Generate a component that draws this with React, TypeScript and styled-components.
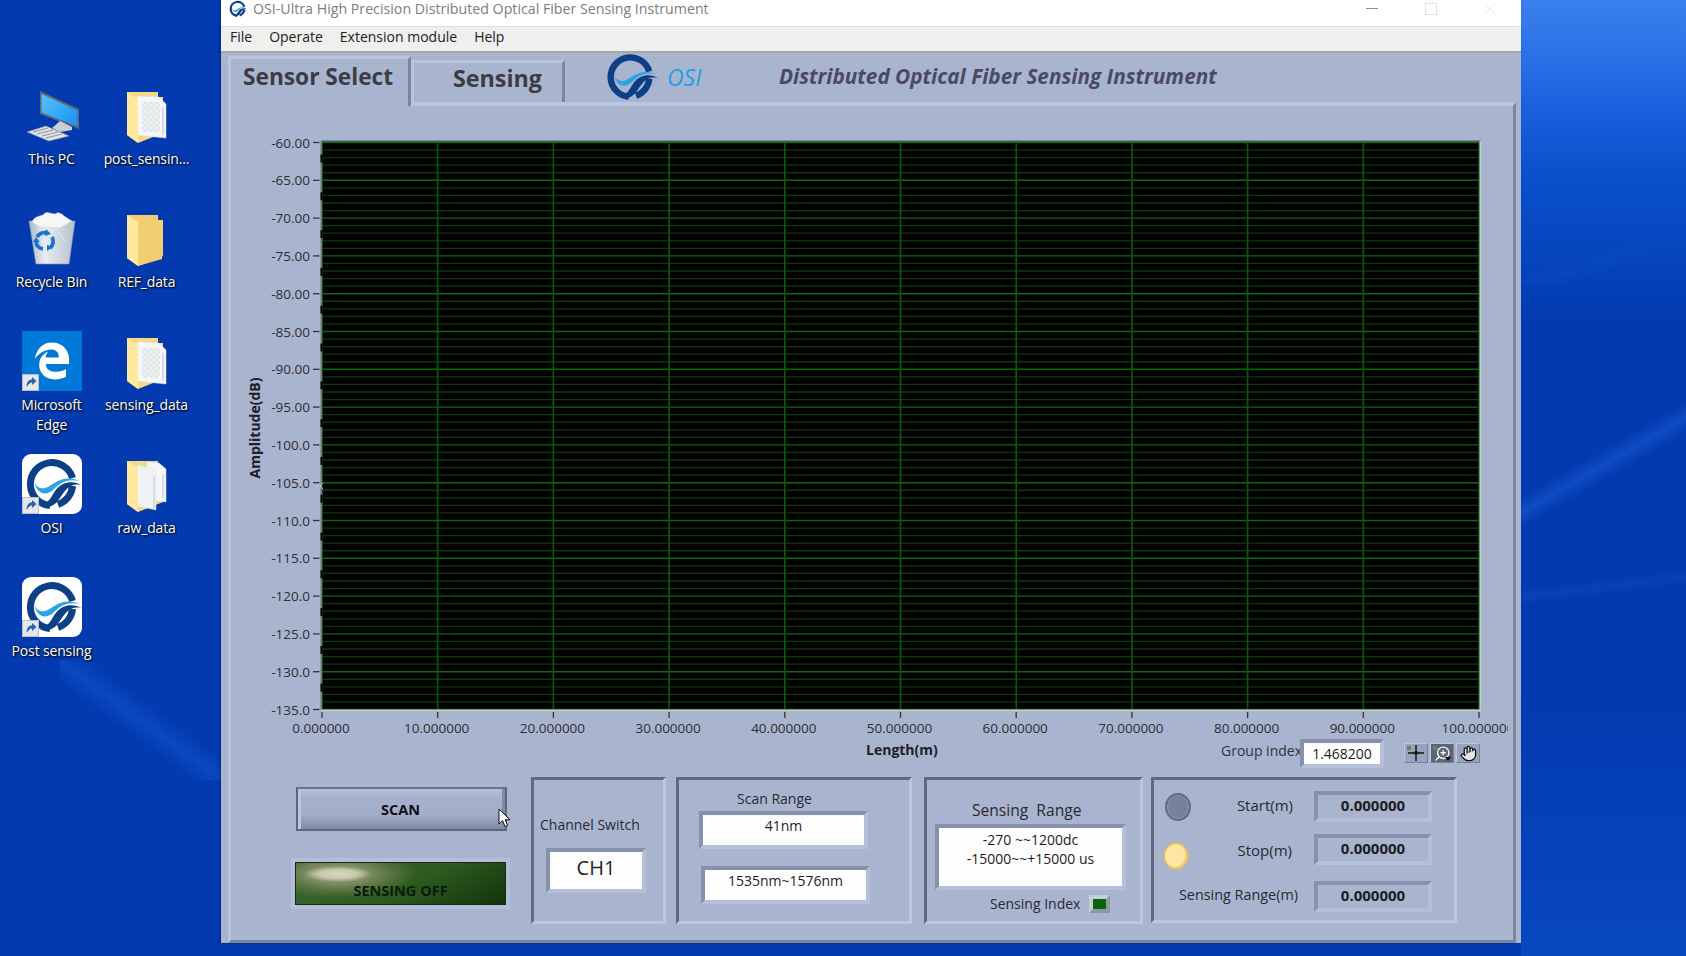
import React from "react";
import styled, { createGlobalStyle } from "styled-components";
import { Hand, ZoomIn } from "lucide-react";
import { FaEdgeLegacy } from "react-icons/fa6";

const UI_FONT = `"Open Sans", "Noto Sans", "Liberation Sans", sans-serif`;
const PANEL = "#a9b4cf";
const LIGHT = "#b9c4e1";
const DARK = "#626a82";

const Global = createGlobalStyle`
  html, body { margin: 0; padding: 0; overflow: hidden; background: #033ab0; }
  * { box-sizing: border-box; }
`;

const Desktop = styled.div`
  width: 1686px;
  height: 956px;
  display: flex;
  align-items: flex-start;
  overflow: hidden;
  font-family: ${UI_FONT};
  background:
    linear-gradient(180deg, #3a80ec 0, #2a70e6 60px, #1a5fdc 110px, #0c50cc 170px, #0649c2 230px, rgba(6, 73, 194, 0) 320px) right top / 165px 320px no-repeat,
    linear-gradient(163deg, transparent 35%, rgba(40, 110, 225, 0.18) 50%, transparent 65%) 1521px 235px / 165px 50px no-repeat,
    linear-gradient(150deg, transparent 43%, rgba(35, 105, 225, 0.38) 50%, transparent 57%) 1521px 395px / 165px 140px no-repeat,
    linear-gradient(173deg, transparent 35%, rgba(40, 110, 225, 0.16) 50%, transparent 65%) 1521px 572px / 165px 30px no-repeat,
    linear-gradient(36deg, transparent 40%, rgba(20, 100, 225, 0.34) 50%, transparent 60%) 60px 660px / 161px 120px no-repeat,
    linear-gradient(180deg, rgba(8, 72, 192, 0) 0, #0848c0 100%) right 700px / 165px 256px no-repeat,
    #033ab0;
`;

const IconGrid = styled.div`
  width: 221px;
  flex: none;
  padding: 85px 0 0 4px;
  display: grid;
  grid-template-columns: 95px 95px;
  grid-auto-rows: 123px;
  justify-content: start;
`;

const IconCell = styled.div`
  display: flex;
  flex-direction: column;
  align-items: center;
`;

const IconArt = styled.svg`
  width: 60px;
  height: 60px;
  display: block;
  flex: none;
`;

const IconLabel = styled.div`
  margin-top: 4px;
  width: 95px;
  text-align: center;
  color: #fff;
  font-size: 14px;
  line-height: 19.5px;
  letter-spacing: -0.15px;
  text-shadow: 1px 1px 2px #000, 0 0 2px rgba(0, 0, 0, 0.7);
`;

const Shortcut = () => (
  <g>
    <rect x="0.5" y="43.5" width="16" height="16" fill="#e4e7ec" stroke="#b9bec7" />
    <path d="M4.5 56 C4.5 50.5 7 48.5 10 48.2 L10 46 L14.5 50 L10 54 L10 51.5 C8 51.5 6.5 53 4.5 56 Z" fill="#2d64a8" />
  </g>
);

const LogoMark = () => (
  <g>
    <path d="M50.5 24 A21.5 21.5 0 1 0 28 51.5" fill="none" stroke="#0d3f86" strokeWidth="7" />
    <path d="M50.5 32 A21.5 21.5 0 0 1 36 50.5" fill="none" stroke="#0d3f86" strokeWidth="7" />
    <path d="M20 49 C31 49 29 36 41 30 C47 27 54 28 60 31 C52 29.5 47 32 43 37 C37 44 36 50 27 53 Z" fill="#0d3f86" />
    <path d="M12 27 C14 33 18 35 23 34 C31 32 39 19 58 27 C44 24 37 30 31 36 C24 42 15 41 12 27 Z" fill="#2aa5e6" />
  </g>
);

const PcIcon = () => (
  <IconArt viewBox="0 0 60 60">
    <defs>
      <linearGradient id="pcScreen" x1="0" y1="0" x2="1" y2="1">
        <stop offset="0" stopColor="#55c3ff" />
        <stop offset="1" stopColor="#1b8fee" />
      </linearGradient>
    </defs>
    <polygon points="18,6 57,24 57,44 18,29" fill="#5f6772" />
    <polygon points="19.5,9 55.5,25.5 55.5,41.5 19.5,27.5" fill="url(#pcScreen)" />
    <polygon points="38,36 50,42 50,45 38,47 30,43" fill="#c8ced6" />
    <polygon points="5,47 24,41 47,51 27,56" fill="#dfe3e8" stroke="#8d939c" strokeWidth="0.6" />
    <path d="M11 47 L26 43 M15 49 L31 45 M20 51 L36 47 M24 53 L40 49" stroke="#8d939c" strokeWidth="1" />
  </IconArt>
);

const BinIcon = () => (
  <IconArt viewBox="0 0 60 60">
    <defs>
      <linearGradient id="binBody" x1="0" y1="0" x2="1" y2="0">
        <stop offset="0" stopColor="#aab7c6" />
        <stop offset="0.35" stopColor="#e8edf2" />
        <stop offset="1" stopColor="#b5c0cd" />
      </linearGradient>
    </defs>
    <polygon points="7,13 53,13 47,56 14,56" fill="url(#binBody)" stroke="#8b98a8" strokeWidth="0.6" />
    <path d="M10 14 C13 7 19 9 22 6 C26 2 31 8 35 5 C39 4 42 9 50 13 L38 20 L18 19 Z" fill="#f5f6f8" stroke="#c5ccd5" strokeWidth="0.6" />
    <path d="M16 20 L26 30 M33 20 L44 34 M22 22 L36 44" stroke="#dfe4ea" strokeWidth="1.2" />
    <g fill="none" stroke="#1e73d2" strokeWidth="3.8">
      <path d="M15 29 A8.5 8.5 0 0 1 25 25" />
      <path d="M30 29 A8.5 8.5 0 0 1 28 40" />
      <path d="M21 41 A8.5 8.5 0 0 1 14 34" />
    </g>
    <path d="M24 21 L29 26 L23 28 Z M31 39 L25 43 L25 37 Z M11 34 L18 34 L14 29 Z" fill="#1e73d2" />
  </IconArt>
);

const EdgeTile = styled.div`
  position: relative;
  width: 60px;
  height: 60px;
  flex: none;
  background: #0078d7;
  color: #fff;
  display: flex;
  align-items: center;
  justify-content: center;
  font-size: 38px;
`;

const OverlayBadge = styled.svg`
  position: absolute;
  left: 0;
  top: 0;
  width: 60px;
  height: 60px;
`;

const EdgeIcon = () => (
  <EdgeTile>
    <FaEdgeLegacy />
    <OverlayBadge viewBox="0 0 60 60">
      <Shortcut />
    </OverlayBadge>
  </EdgeTile>
);

const OsiIcon = () => (
  <IconArt viewBox="0 0 60 60">
    <rect width="60" height="60" rx="9" fill="#fff" />
    <LogoMark />
    <Shortcut />
  </IconArt>
);

type FolderKind = "doc" | "plain" | "multi";

const FolderIcon = ({ kind }: { kind: FolderKind }) => (
  <IconArt viewBox="0 0 60 60">
    <defs>
      <pattern id="docWeave" width="4" height="4" patternUnits="userSpaceOnUse" patternTransform="rotate(45)">
        <rect width="4" height="4" fill="#eef1f1" />
        <path d="M0 0 H4 M0 0 V4" stroke="#cdd3d3" strokeWidth="0.8" />
      </pattern>
    </defs>
    <polygon points="10,7 41,7 41,12 46,12 46,48 21,58 10,50" fill={kind === "plain" ? "#f4cf73" : "#f6d983"} />
    {kind === "plain" && <polygon points="21,14 41,7 42,40 45,43 45,51 21,58" fill="#f3cd72" />}
    {kind === "doc" && (
      <g>
        <polygon points="20,11 42,12 49,19 49,53 20,50" fill="#f5f6f7" stroke="#dfe2e6" strokeWidth="0.5" />
        <rect x="25" y="17" width="18" height="30" fill="url(#docWeave)" />
        <path d="M46 22 V50" stroke="#9db4de" strokeWidth="0.8" />
      </g>
    )}
    {kind === "multi" && (
      <g>
        <polygon points="30,8 42,9 49,15 49,48 30,46" fill="#f5f6f7" stroke="#dfe2e6" strokeWidth="0.5" />
        <polygon points="20,11 34,14 39,20 39,56 20,52" fill="#f1f2f4" stroke="#d5d9df" strokeWidth="0.5" />
        <path d="M37 22 V54 M46 20 V44" stroke="#a8bde0" strokeWidth="0.8" />
      </g>
    )}
    <polygon points="10,7 21,14 21,58 10,50" fill="#ffe99f" />
  </IconArt>
);

const Win = styled.div`
  width: 1300px;
  height: 943px;
  flex: none;
  display: flex;
  flex-direction: column;
  background: ${PANEL};
  box-shadow: -1px 0 2px rgba(0, 20, 90, 0.5);
`;

const TitleBar = styled.div`
  height: 27px;
  flex: none;
  background: #fff;
  border-bottom: 1px solid #e0e0e0;
  display: flex;
  align-items: flex-start;
  padding-left: 7px;
`;

const TitleLogo = styled.svg`
  width: 20px;
  height: 17px;
  flex: none;
`;

const TitleText = styled.div`
  margin-left: 5px;
  font-size: 14.2px;
  line-height: 18px;
  color: #7d7d7d;
  white-space: nowrap;
`;

const WinButtons = styled.div`
  margin-left: auto;
  display: flex;
  padding-right: 25px;
  gap: 47px;
`;

const WinGlyph = styled.svg`
  width: 12px;
  height: 18px;
  display: block;
`;

const MenuBar = styled.div`
  height: 26px;
  flex: none;
  background: #efefee;
  border-bottom: 2px solid #a5a5a5;
  display: flex;
  align-items: center;
  padding: 0 0 5px 9px;
  gap: 17px;
  font-size: 14px;
  color: #222;
`;

const MenuItem = styled.span`
  white-space: nowrap;
`;

const Strip = styled.div`
  height: 49px;
  flex: none;
  display: flex;
  align-items: flex-end;
  padding-left: 7px;
`;

const ActiveTab = styled.div`
  width: 183px;
  height: 50px;
  margin-bottom: -4px;
  position: relative;
  z-index: 1;
  background: ${PANEL};
  border-top: 3px solid ${LIGHT};
  border-left: 3px solid ${LIGHT};
  border-right: 3px solid #7d859c;
  padding: 2px 0 0 12px;
  font-size: 22.7px;
  font-weight: 700;
  line-height: 32px;
  color: #3c3c46;
  white-space: nowrap;
`;

const IdleTab = styled.div`
  width: 154px;
  height: 42px;
  background: ${PANEL};
  border-top: 3px solid ${LIGHT};
  border-left: 3px solid ${LIGHT};
  border-right: 3px solid #7d859c;
  display: flex;
  align-items: center;
  justify-content: center;
  padding: 0 0 9px 19px;
  font-size: 23.3px;
  font-weight: 700;
  color: #3c3c46;
`;

const HeadLogo = styled.svg`
  width: 55px;
  height: 46px;
  flex: none;
  align-self: flex-start;
  margin: 1px 0 0 38px;
`;

const OsiWord = styled.div`
  align-self: center;
  margin: -2px 0 0 9px;
  width: 40px;
  font-size: 23px;
  font-style: italic;
  color: #1f9fe8;
`;

const HeadTitle = styled.div`
  align-self: center;
  margin: -4px 0 0 72px;
  font-size: 20.75px;
  font-weight: 700;
  font-style: italic;
  color: #4a4a68;
  white-space: nowrap;
`;

const TabBody = styled.div`
  flex: 1;
  margin: 0 5px 0 7px;
  border-top: 4px solid ${LIGHT};
  border-left: 3px solid ${LIGHT};
  border-right: 3px solid #7d859c;
  border-bottom: 3px solid #7d859c;
  display: flex;
  flex-direction: column;
`;

const ChartSvg = styled.svg`
  width: 1282px;
  height: 633px;
  display: block;
  flex: none;
`;

const AxisText = styled.text`
  font-family: ${UI_FONT};
  font-size: 13.5px;
  fill: #2e2e36;
`;

const AxisTitle = styled.text`
  font-family: ${UI_FONT};
  font-size: 14px;
  font-weight: 700;
  fill: #1e1e24;
`;

const Y0 = 142.5;
const YSTEP = 37.8;
const X0 = 322;
const XSTEP = 115.7;
const yLabels = ["-60.00", "-65.00", "-70.00", "-75.00", "-80.00", "-85.00", "-90.00", "-95.00", "-100.0", "-105.0", "-110.0", "-115.0", "-120.0", "-125.0", "-130.0", "-135.0"];
const xLabels = ["0.000000", "10.000000", "20.000000", "30.000000", "40.000000", "50.000000", "60.000000", "70.000000", "80.000000", "90.000000", "100.000000"];

const Chart = () => {
  const minors: number[] = [];
  for (let i = 0; i < 75; i++) if (i % 5 !== 0) minors.push(Y0 + (i * YSTEP) / 5);
  return (
    <ChartSvg viewBox="231 106 1282 633">
      <defs>
        <clipPath id="chartClip">
          <rect x="231" y="106" width="1277" height="633" />
        </clipPath>
      </defs>
      <rect x="322" y="141" width="1158" height="569" fill="#000" />
      {minors.map((y) => (
        <line key={y} x1="322" x2="1480" y1={y} y2={y} stroke="#0b3a0b" strokeWidth="1.3" />
      ))}
      {yLabels.map((_, i) => (
        <line key={i} x1="322" x2="1480" y1={Y0 + i * YSTEP} y2={Y0 + i * YSTEP} stroke="#0b6a0b" strokeWidth="1.4" />
      ))}
      {xLabels.map((_, i) => (
        <line key={i} x1={X0 + i * XSTEP} x2={X0 + i * XSTEP} y1="141" y2="710" stroke="#0b5a0b" strokeWidth="1.6" />
      ))}
      <rect x="321" y="140.5" width="1160" height="1.6" fill="#56565e" />
      <rect x="320.5" y="141" width="1.6" height="569" fill="#6f7480" />
      {yLabels.slice(0, 15).map((_, i) => (
        <rect key={i} x="320.5" y={Y0 + i * YSTEP + 12} width="2" height="8" fill="#000" />
      ))}
      <rect x="1479.5" y="141" width="1.5" height="570" fill="#c9ccd2" />
      <rect x="321" y="709.5" width="1160" height="1.6" fill="#c9ccd2" />
      <path d="M323 483 L320 486 L323 489" fill="none" stroke="#c9ccd2" strokeWidth="1" />
      {yLabels.map((t, i) => (
        <g key={t}>
          <line x1="313" x2="319.5" y1={Y0 + i * YSTEP} y2={Y0 + i * YSTEP} stroke="#33333b" strokeWidth="1.3" />
          <AxisText x="310" y={Y0 + i * YSTEP + 5} textAnchor="end">{t}</AxisText>
        </g>
      ))}
      <g clipPath="url(#chartClip)">
        {xLabels.map((t, i) => (
          <g key={t}>
            <line x1={X0 + i * XSTEP} x2={X0 + i * XSTEP} y1="712" y2="718" stroke="#33333b" strokeWidth="1.3" />
            <AxisText x={X0 + i * XSTEP - 1} y="733" textAnchor="middle">{t}</AxisText>
          </g>
        ))}
      </g>
      <AxisTitle transform="translate(260 428) rotate(-90)" textAnchor="middle">Amplitude(dB)</AxisTitle>
    </ChartSvg>
  );
};

const GraphFooter = styled.div`
  height: 33px;
  flex: none;
  display: flex;
  align-items: flex-start;
  padding-right: 33px;
`;

const LengthLabel = styled.div`
  margin: 1px auto 0 635px;
  font-size: 14px;
  font-weight: 700;
  line-height: 20px;
  color: #1e1e24;
`;

const GroupLabel = styled.div`
  margin: 2px -2px 0 0;
  font-size: 14px;
  line-height: 20px;
  color: #33333b;
  white-space: nowrap;
`;

const Sunken = styled.div<{ $w: number; $h: number; $mt?: number; $ml?: number; $bg?: string; $size?: number; $bold?: boolean; $top?: boolean; $lift?: number }>`
  width: ${(p) => p.$w}px;
  height: ${(p) => p.$h}px;
  flex: none;
  margin-top: ${(p) => p.$mt ?? 0}px;
  margin-left: ${(p) => p.$ml ?? 0}px;
  background: ${(p) => p.$bg ?? "#fdfdfd"};
  border-width: 4px;
  border-style: solid;
  border-color: #8791ad #b5bfda #b5bfda #8791ad;
  display: flex;
  flex-direction: column;
  align-items: center;
  justify-content: ${(p) => (p.$top ? "flex-start" : "center")};
  padding-top: ${(p) => (p.$top ? 2 : 0)}px;
  padding-bottom: ${(p) => p.$lift ?? 0}px;
  position: relative;
  font-size: ${(p) => p.$size ?? 14}px;
  font-weight: ${(p) => (p.$bold ? 700 : 400)};
  line-height: 19px;
  color: #1d1d24;
  white-space: nowrap;
`;

const Tools = styled.div`
  display: flex;
  gap: 2px;
  margin: 4px 0 0 20px;
`;

const ToolBtn = styled.div<{ $on?: boolean }>`
  width: 24px;
  height: 20px;
  position: relative;
  background: ${(p) => (p.$on ? "#5d6478" : "#98a3c0")};
  border: 1px solid;
  border-color: #bcc6e0 #78819a #78819a #bcc6e0;
  display: flex;
  align-items: center;
  justify-content: center;
  color: #111;
`;

const ToolDot = styled.span`
  position: absolute;
  left: 2px;
  top: 2px;
  width: 4px;
  height: 4px;
  background: #5f8f4f;
`;

const CrossGlyph = styled.svg`
  width: 18px;
  height: 18px;
`;

const Magnifier = styled(ZoomIn)`
  transform: scaleX(-1);
  color: #f2f2f2;
`;

const MenuCaret = styled.span`
  position: absolute;
  right: 2px;
  bottom: 1px;
  border-left: 3px solid transparent;
  border-right: 3px solid transparent;
  border-top: 4px solid #0c0c0c;
`;

const BottomRow = styled.div`
  display: flex;
  align-items: flex-start;
  margin-top: 5px;
`;

const ScanColumn = styled.div`
  width: 219px;
  flex: none;
  margin-left: 60px;
  position: relative;
  display: flex;
  flex-direction: column;
`;

const ScanButton = styled.div`
  width: 211px;
  height: 44px;
  margin: 10px 0 0 5px;
  border: 2px solid #5f667c;
  border-top-color: #6b728a;
  background:
    linear-gradient(180deg, #b6c1df 0, #a6b1cd 20%, #a2adc9 65%, #7e89a6 100%);
  box-shadow: inset 3px 0 0 #bac5e2, inset -3px 0 0 #7f8aa7;
  display: flex;
  align-items: center;
  justify-content: center;
  padding-right: 2px;
  font-size: 14.5px;
  font-weight: 700;
  color: #101018;
`;

const SensingFrame = styled.div`
  width: 219px;
  height: 51px;
  margin-top: 27px;
  border: 4px solid #b3bedb;
  display: flex;
`;

const SensingLamp = styled.div`
  flex: 1;
  border: 1px solid #1a2a10;
  background:
    radial-gradient(ellipse 34px 8px at 42px 11px, #d9d9c4 0, #c8c8ae 55%, rgba(160, 165, 130, 0) 100%),
    radial-gradient(ellipse 78px 24px at 42px 11px, #9a9f80 0, #7c8c62 40%, #52703c 72%, rgba(60, 96, 40, 0) 100%),
    linear-gradient(150deg, #3c6a2c 0, #2e5a20 55%, #12340a 100%);
  display: flex;
  align-items: flex-end;
  justify-content: center;
  padding-bottom: 3px;
  font-size: 14.5px;
  font-weight: 700;
  line-height: 20px;
  color: #0a1c0a;
`;

const CursorArt = styled.svg`
  position: absolute;
  left: 207px;
  top: 31px;
  width: 13px;
  height: 20px;
`;

const GroupBox = styled.div<{ $w: number; $h?: number; $ml: number }>`
  width: ${(p) => p.$w}px;
  height: ${(p) => p.$h ?? 147}px;
  flex: none;
  margin-left: ${(p) => p.$ml}px;
  border-width: 3px;
  border-style: solid;
  border-color: ${DARK} #bcc6e2 #bcc6e2 ${DARK};
  display: flex;
  flex-direction: column;
  align-items: flex-start;
`;

const BoxLabel = styled.div<{ $mt: number; $ml: number; $wide?: boolean }>`
  margin: ${(p) => p.$mt}px 0 0 ${(p) => p.$ml}px;
  font-size: ${(p) => (p.$wide ? 15.6 : 14)}px;
  line-height: 20px;
  color: #2a2a33;
  white-space: pre;
`;

const IndexRow = styled.div`
  display: flex;
  align-items: center;
  margin: 5px 0 0 63px;
  gap: 9px;
  font-size: 14px;
  line-height: 18px;
  color: #2a2a33;
`;

const IndexLed = styled.span`
  width: 21px;
  height: 18px;
  background: #0a640a;
  border: 4px solid;
  border-color: #c6ccd8 #8f97a8 #8f97a8 #c6ccd8;
`;

const ReadRow = styled.div<{ $mt: number }>`
  width: 278px;
  height: 31px;
  margin-top: ${(p) => p.$mt}px;
  padding-left: 11px;
  display: flex;
  align-items: center;
`;

const Led = styled.span<{ $on?: boolean }>`
  width: 26px;
  height: 28px;
  flex: none;
  margin-top: ${(p) => (p.$on ? 12 : 0)}px;
  margin-left: ${(p) => (p.$on ? -2 : 0)}px;
  margin-right: ${(p) => (p.$on ? 2 : 0)}px;
  border-radius: 50%;
  background: ${(p) => (p.$on ? "#fde5a2" : "#77819a")};
  border: 2px solid ${(p) => (p.$on ? "#d9ba78" : "#626b82")};
  box-shadow: ${(p) => (p.$on ? "inset -2px -1px 0 #f1cf86" : "inset 0 0 0 1px #8a93aa")};
`;

const ReadLabel = styled.div<{ $pr: number; $pb?: number; $size?: number }>`
  flex: 1;
  text-align: right;
  padding-right: ${(p) => p.$pr}px;
  padding-bottom: ${(p) => p.$pb ?? 4}px;
  font-size: ${(p) => p.$size ?? 14.4}px;
  color: #2a2a33;
  white-space: nowrap;
`;

export default function App() {
  return (
    <>
      <Global />
      <Desktop>
        <IconGrid>
          <IconCell><PcIcon /><IconLabel>This PC</IconLabel></IconCell>
          <IconCell><FolderIcon kind="doc" /><IconLabel>post_sensin...</IconLabel></IconCell>
          <IconCell><BinIcon /><IconLabel>Recycle Bin</IconLabel></IconCell>
          <IconCell><FolderIcon kind="plain" /><IconLabel>REF_data</IconLabel></IconCell>
          <IconCell><EdgeIcon /><IconLabel>Microsoft Edge</IconLabel></IconCell>
          <IconCell><FolderIcon kind="doc" /><IconLabel>sensing_data</IconLabel></IconCell>
          <IconCell><OsiIcon /><IconLabel>OSI</IconLabel></IconCell>
          <IconCell><FolderIcon kind="multi" /><IconLabel>raw_data</IconLabel></IconCell>
          <IconCell><OsiIcon /><IconLabel>Post sensing</IconLabel></IconCell>
        </IconGrid>
        <Win>
          <TitleBar>
            <TitleLogo viewBox="0 3 62 52"><LogoMark /></TitleLogo>
            <TitleText>OSI-Ultra High Precision Distributed Optical Fiber Sensing Instrument</TitleText>
            <WinButtons>
              <WinGlyph viewBox="0 0 12 18"><path d="M0 8.5 H12" stroke="#8c8c8c" strokeWidth="1" /></WinGlyph>
              <WinGlyph viewBox="0 0 12 18"><rect x="0.5" y="3.5" width="11" height="11" fill="none" stroke="#e2e2e2" /></WinGlyph>
              <WinGlyph viewBox="0 0 12 18"><path d="M0 3 L12 15 M12 3 L0 15" stroke="#e8e8e8" strokeWidth="1" /></WinGlyph>
            </WinButtons>
          </TitleBar>
          <MenuBar>
            <MenuItem>File</MenuItem>
            <MenuItem>Operate</MenuItem>
            <MenuItem>Extension module</MenuItem>
            <MenuItem>Help</MenuItem>
          </MenuBar>
          <Strip>
            <ActiveTab>Sensor Select</ActiveTab>
            <IdleTab>Sensing</IdleTab>
            <HeadLogo viewBox="0 5 60 50"><LogoMark /></HeadLogo>
            <OsiWord>OSI</OsiWord>
            <HeadTitle>Distributed Optical Fiber Sensing Instrument</HeadTitle>
          </Strip>
          <TabBody>
            <Chart />
            <GraphFooter>
              <LengthLabel>Length(m)</LengthLabel>
              <GroupLabel>Group index</GroupLabel>
              <Sunken $w={84} $h={29}>1.468200</Sunken>
              <Tools>
                <ToolBtn>
                  <ToolDot />
                  <CrossGlyph viewBox="0 0 18 18"><path d="M9 1 V17 M1 9 H17" stroke="#111" strokeWidth="1.4" /><circle cx="9" cy="9" r="2" fill="#111" /></CrossGlyph>
                </ToolBtn>
                <ToolBtn $on>
                  <ToolDot />
                  <Magnifier size={17} strokeWidth={2} />
                  <MenuCaret />
                </ToolBtn>
                <ToolBtn>
                  <Hand size={17} strokeWidth={1.8} fill="#e6e6e6" />
                </ToolBtn>
              </Tools>
            </GraphFooter>
            <BottomRow>
              <ScanColumn>
                <ScanButton>SCAN</ScanButton>
                <SensingFrame><SensingLamp>SENSING OFF</SensingLamp></SensingFrame>
                <CursorArt viewBox="0 0 13 20">
                  <path d="M1 1 L1 16 L4.6 12.6 L7 18.5 L9.6 17.4 L7.2 11.8 L12 11.8 Z" fill="#fff" stroke="#111" strokeWidth="1" />
                </CursorArt>
              </ScanColumn>
              <GroupBox $w={135} $ml={21}>
                <BoxLabel $mt={35} $ml={6}>Channel Switch</BoxLabel>
                <Sunken $w={100} $h={45} $mt={13} $ml={12} $size={20} $lift={6}>CH1</Sunken>
              </GroupBox>
              <GroupBox $w={236} $ml={10}>
                <BoxLabel $mt={9} $ml={58}>Scan Range</BoxLabel>
                <Sunken $w={169} $h={38} $mt={2} $ml={20} $lift={10}>41nm</Sunken>
                <Sunken $w={169} $h={38} $mt={17} $ml={22} $lift={10}>1535nm~1576nm</Sunken>
              </GroupBox>
              <GroupBox $w={219} $ml={12}>
                <BoxLabel $mt={20} $ml={45} $wide>{"Sensing  Range"}</BoxLabel>
                <Sunken $w={191} $h={66} $mt={4} $ml={8} $top>
                  <span>-270 ~~1200dc</span>
                  <span>-15000~~+15000 us</span>
                </Sunken>
                <IndexRow>Sensing Index<IndexLed /></IndexRow>
              </GroupBox>
              <GroupBox $w={306} $h={146} $ml={8}>
                <ReadRow $mt={11}>
                  <Led />
                  <ReadLabel $pr={21} $size={15}>Start(m)</ReadLabel>
                  <Sunken $w={118} $h={31} $bg="transparent" $size={15} $bold $lift={2}>0.000000</Sunken>
                </ReadRow>
                <ReadRow $mt={12}>
                  <Led $on />
                  <ReadLabel $pr={22} $size={15} $pb={0}>Stop(m)</ReadLabel>
                  <Sunken $w={118} $h={31} $bg="transparent" $size={15} $bold $lift={2}>0.000000</Sunken>
                </ReadRow>
                <ReadRow $mt={16}>
                  <ReadLabel $pr={16}>Sensing Range(m)</ReadLabel>
                  <Sunken $w={118} $h={31} $bg="transparent" $size={15} $bold $lift={2}>0.000000</Sunken>
                </ReadRow>
              </GroupBox>
            </BottomRow>
          </TabBody>
        </Win>
      </Desktop>
    </>
  );
}
